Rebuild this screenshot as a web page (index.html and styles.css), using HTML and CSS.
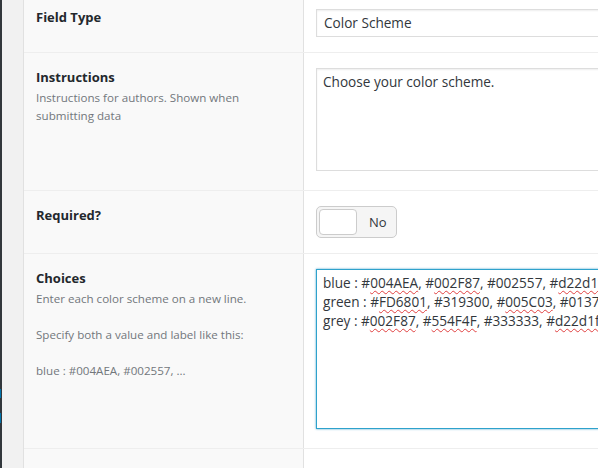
FILE: index.html
```html
<!DOCTYPE html>
<html>
<head>
<meta charset="utf-8">
<link rel="stylesheet" href="styles.css">
</head>
<body>
<div class="frame">
  <div class="adminbar">
    <span class="mark mark-a"></span>
    <span class="mark mark-b"></span>
  </div>
  <div class="gutter"></div>
  <div class="fields">
    <div class="row row-first">
      <div class="label"><div class="title">Field Type</div></div>
      <div class="input"><div class="select">Color Scheme</div></div>
    </div>
    <div class="row row-instr">
      <div class="label">
        <div class="title">Instructions</div>
        <div class="desc">Instructions for authors. Shown when<br>submitting data</div>
      </div>
      <div class="input"><div class="textarea ta-instr">Choose your color scheme.</div></div>
    </div>
    <div class="row row-req">
      <div class="label"><div class="title">Required?</div></div>
      <div class="input">
        <div class="toggle"><span class="knob"></span><span class="toggle-text">No</span></div>
      </div>
    </div>
    <div class="row row-choices">
      <div class="label">
        <div class="title">Choices</div>
        <div class="desc">Enter each color scheme on a new line.<br><br>Specify both a value and label like this:<br><br>blue : #004AEA, #002557, ...</div>
      </div>
      <div class="input">
        <div class="textarea ta-choices"><div>blue : #<span class="sp">004AEA</span>, #<span class="sp">002F87</span>, #002557, #<span class="sp">d22d1f</span></div><div>green : #<span class="sp">FD6801</span>, #319300, #<span class="sp">005C03</span>, #01370f</div><div>grey : #<span class="sp">002F87</span>, #<span class="sp">554F4F</span>, #333333, #<span class="sp">d22d1f</span></div></div>
      </div>
    </div>
    <div class="row row-last">
      <div class="label"></div>
      <div class="input"></div>
    </div>
  </div>
</div>
</body>
</html>
```
FILE: styles.css
```css
html, body {
  margin: 0;
  padding: 0;
  overflow: hidden;
  width: 598px;
  height: 468px;
  background: #fff;
}
.frame {
  display: flex;
  height: 468px;
  font-family: "Open Sans", "Noto Sans", sans-serif;
  color: #23282d;
}
.adminbar {
  width: 2px;
  flex: none;
  background: #32373c;
  position: relative;
}
.mark {
  position: absolute;
  left: 0;
  width: 1px;
  background: #0073aa;
}
.mark-a { top: 389px; height: 9px; }
.mark-b { top: 413px; height: 10px; }
.gutter {
  width: 21px;
  flex: none;
  background: #f1f1f1;
  border-right: 1px solid #e1e1e1;
}
.fields {
  flex: none;
  width: 800px;
  margin-top: -7px;
}
.row {
  display: grid;
  grid-template-columns: 280px 1fr;
  border-top: 1px solid #eeeeee;
}
.row-first { border-top: none; }
.label {
  background: #f9f9f9;
  border-right: 1px solid #e1e1e1;
  padding: 15px 12px;
}
.input {
  padding: 15px 12px;
  background: #fff;
}
.title {
  font-size: 13px;
  font-weight: 700;
  line-height: 18px;
  margin-bottom: 3px;
}
.desc {
  font-size: 11.6px;
  line-height: 18px;
  color: #72777c;
}
.select {
  box-sizing: border-box;
  height: 28px;
  border: 1px solid #dddddd;
  box-shadow: inset 0 1px 2px rgba(0,0,0,0.07);
  font-size: 13.6px;
  line-height: 26px;
  padding: 0 7px;
  color: #32373c;
}
.row-first .input { padding-top: 16px; }
.textarea {
  box-sizing: border-box;
  border: 1px solid #dddddd;
  box-shadow: inset 0 1px 2px rgba(0,0,0,0.07);
  font-size: 13.6px;
  line-height: 19px;
  padding: 3px 6px;
  color: #32373c;
  white-space: nowrap;
  overflow: hidden;
}
.ta-instr { height: 103px; }
.row-instr .input { padding-bottom: 19px; }
.ta-choices {
  height: 160px;
  border-color: #2ea2cc;
  box-shadow: 0 0 2px rgba(30,140,190,0.8);
  padding-top: 3px;
}
.row-choices .input { padding-bottom: 19px; }
.sp {
  text-decoration: underline wavy #e04040;
  text-decoration-thickness: 1px;
  text-underline-offset: 2px;
}
.toggle {
  box-sizing: border-box;
  width: 81px;
  height: 32px;
  border: 1px solid #cccccc;
  border-radius: 5px;
  background: #f5f5f5;
  display: flex;
  align-items: center;
  padding: 2px;
  gap: 12px;
}
.knob {
  box-sizing: border-box;
  width: 38px;
  height: 26px;
  background: #fff;
  border: 1px solid #cccccc;
  border-radius: 4px;
}
.toggle-text {
  font-size: 13px;
  color: #32373c;
}
.row-last { height: 60px; }
```
